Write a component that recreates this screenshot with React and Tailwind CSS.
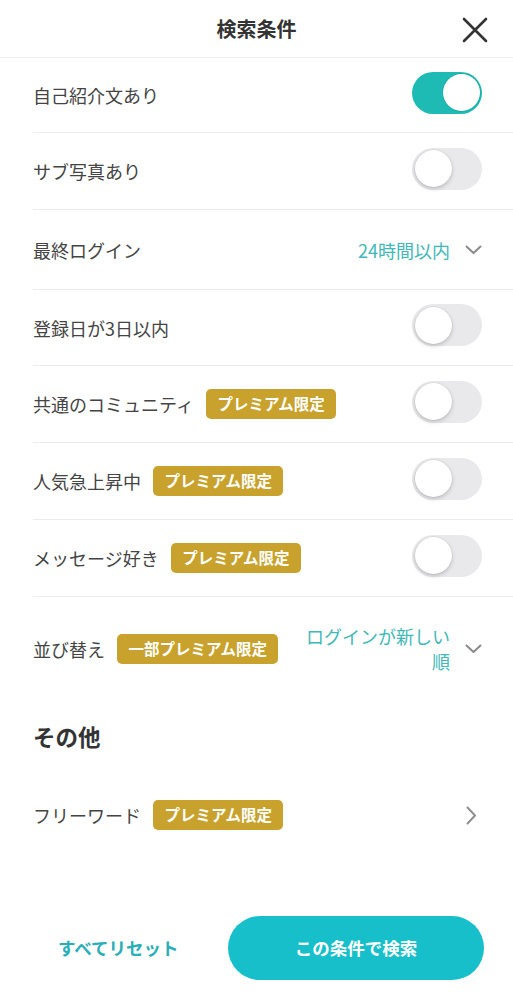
import React, { useState } from "react";

const FONT = { fontFamily: '"Noto Sans CJK JP", "Noto Sans", sans-serif' };

function Toggle({ on, onChange }) {
  return (
    <button
      onClick={onChange}
      className={`relative w-[70px] h-[42px] rounded-full shrink-0 ${on ? "bg-[#1ebbb5]" : "bg-[#e9e9ec]"}`}
    >
      <span
        className={`absolute top-[2.5px] w-[37px] h-[37px] rounded-full bg-white ${
          on ? "left-[30.5px] shadow-[0_0_0_1px_rgba(20,150,145,0.35)]" : "left-[2.5px] shadow-[0_2px_4px_rgba(0,0,0,0.18),0_0_0_0.5px_rgba(0,0,0,0.08)]"
        }`}
      />
    </button>
  );
}

function Badge({ children }) {
  return (
    <span className="ml-[12px] inline-flex items-center h-[30px] px-[11.5px] rounded-[5px] bg-[#c8a22c] text-white text-[15.5px] font-bold leading-none">
      {children}
    </span>
  );
}

function ChevronDown() {
  return (
    <svg width="17" height="10" viewBox="0 0 17 10" className="shrink-0">
      <path d="M1.5 1.5 L8.5 8 L15.5 1.5" fill="none" stroke="#8a8a8a" strokeWidth="2" strokeLinecap="round" strokeLinejoin="round" />
    </svg>
  );
}

function ChevronRight() {
  return (
    <svg width="11" height="19" viewBox="0 0 11 19" className="shrink-0">
      <path d="M1.5 1.5 L9 9.5 L1.5 17.5" fill="none" stroke="#8f8f8f" strokeWidth="2" strokeLinecap="round" strokeLinejoin="round" />
    </svg>
  );
}

function Row({ h = "h-[76px]", border = true, children }) {
  return (
    <div className={`${h} flex items-center pr-[31px] ${border ? "border-b border-[#ececec]" : ""}`}>
      {children}
    </div>
  );
}

function Label({ children }) {
  return <span className="text-[18px] text-[#444] leading-none">{children}</span>;
}

export default function App() {
  const [t, setT] = useState({
    intro: true,
    sub: false,
    reg: false,
    comm: false,
    pop: false,
    msg: false,
  });
  const flip = (k) => setT((s) => ({ ...s, [k]: !s[k] }));

  return (
    <div style={FONT} className="w-[513px] h-[1000px] bg-white flex flex-col">
      <div className="h-[58px] relative flex items-center justify-center border-b border-[#efefef] shrink-0">
        <span className="text-[20px] font-bold text-[#333]">検索条件</span>
        <svg width="26" height="26" viewBox="0 0 26 26" className="absolute right-[25px] top-[16.5px]">
          <path d="M2 2 L24 24 M24 2 L2 24" stroke="#333" strokeWidth="2.6" strokeLinecap="round" />
        </svg>
      </div>

      <div className="pl-[33px]">
        <Row h="h-[75px]">
          <Label>自己紹介文あり</Label>
          <div className="ml-auto"><Toggle on={t.intro} onChange={() => flip("intro")} /></div>
        </Row>
        <Row h="h-[77px]">
          <Label>サブ写真あり</Label>
          <div className="ml-auto"><Toggle on={t.sub} onChange={() => flip("sub")} /></div>
        </Row>
        <Row h="h-[80px]">
          <Label>最終ログイン</Label>
          <div className="ml-auto flex items-center gap-[15px]">
            <span className="text-[18px] text-[#3fb8b8] leading-none">24時間以内</span>
            <ChevronDown />
          </div>
        </Row>
        <Row h="h-[76px]">
          <Label>登録日が3日以内</Label>
          <div className="ml-auto"><Toggle on={t.reg} onChange={() => flip("reg")} /></div>
        </Row>
        <Row h="h-[77px]">
          <Label>共通のコミュニティ</Label>
          <Badge>プレミアム限定</Badge>
          <div className="ml-auto"><Toggle on={t.comm} onChange={() => flip("comm")} /></div>
        </Row>
        <Row h="h-[77px]">
          <Label>人気急上昇中</Label>
          <Badge>プレミアム限定</Badge>
          <div className="ml-auto"><Toggle on={t.pop} onChange={() => flip("pop")} /></div>
        </Row>
        <Row h="h-[77px]">
          <Label>メッセージ好き</Label>
          <Badge>プレミアム限定</Badge>
          <div className="ml-auto"><Toggle on={t.msg} onChange={() => flip("msg")} /></div>
        </Row>
        <Row h="h-[104px]" border={false}>
          <Label>並び替え</Label>
          <Badge>一部プレミアム限定</Badge>
          <div className="ml-auto flex items-center gap-[15px]">
            <span className="text-[18px] text-[#3fb8b8] leading-[25px] text-right">
              ログインが新しい
              <br />
              順
            </span>
            <ChevronDown />
          </div>
        </Row>

        <div className="pt-[20px] pb-[26px]">
          <h2 className="text-[22.5px] font-bold text-[#333] leading-[30px]">その他</h2>
        </div>

        <Row h="h-[76px]" border={false}>
          <Label>フリーワード</Label>
          <Badge>プレミアム限定</Badge>
          <div className="ml-auto mr-[5px]"><ChevronRight /></div>
        </Row>
      </div>

      <div className="mt-auto mb-[20px] flex items-center pl-[58px] pr-[29px]">
        <button className="text-[17.5px] font-bold text-[#2aaeb8]">すべてリセット</button>
        <button className="ml-auto w-[256px] h-[64px] rounded-full bg-[#17bfca] text-white text-[17.5px] font-bold">
          この条件で検索
        </button>
      </div>
    </div>
  );
}
